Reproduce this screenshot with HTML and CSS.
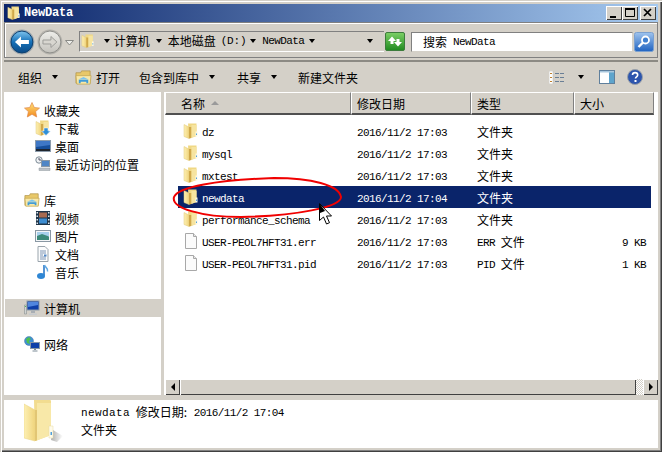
FILE: index.html
```html
<!DOCTYPE html>
<html lang="zh-CN">
<head>
    <meta charset="UTF-8">
    <title>NewData</title>
    <link rel="stylesheet" href="styles.css">
</head>
<body>
    <svg class="defs" xmlns="http://www.w3.org/2000/svg">
        <defs>
            <linearGradient id="g-back" x1="0" y1="0" x2="0" y2="1"><stop offset="0" stop-color="#7fc4ee"/><stop offset=".5" stop-color="#1570b8"/><stop offset="1" stop-color="#0b4a86"/></linearGradient>
            <linearGradient id="g-forward" x1="0" y1="0" x2="0" y2="1"><stop offset="0" stop-color="#eeeeea"/><stop offset="1" stop-color="#c4c2bc"/></linearGradient>
            <linearGradient id="g-green" x1="0" y1="0" x2="0" y2="1"><stop offset="0" stop-color="#7dd067"/><stop offset="1" stop-color="#1f8a1f"/></linearGradient>
            <linearGradient id="g-search" x1="0" y1="0" x2="0" y2="1"><stop offset="0" stop-color="#9fc4ee"/><stop offset="1" stop-color="#1f62c0"/></linearGradient>
            <linearGradient id="g-folder" x1="0" y1="0" x2="1" y2="0"><stop offset="0" stop-color="#fdf0b4"/><stop offset="1" stop-color="#f0d47c"/></linearGradient>
            <linearGradient id="g-shadow" x1="0" y1="0" x2="1" y2="0"><stop offset="0" stop-color="#b0b0ae"/><stop offset="1" stop-color="#ffffff"/></linearGradient>
            <linearGradient id="g-star" x1="0" y1="0" x2="0" y2="1"><stop offset="0" stop-color="#ffe27a"/><stop offset="1" stop-color="#f28a1e"/></linearGradient>

            <symbol id="i-folder" viewBox="0 0 16 16">
                <path d="M5 .5h8.500v12.500L6 15.500z" fill="#f0d884"/>
                <path d="M1 1.500l5 2.500v11.500l-5-2z" fill="url(#g-folder)" stroke="#e0c878" stroke-width=".5"/>
                <path d="M6 4h2.500v11L6 15.500z" fill="#d0a84a"/>
                <path d="M8.500 2h5v11l-5 2z" fill="#f6e4a0"/>
                <path d="M12.500 8.500h2v5h-2z" fill="#fdf8e4"/>
                <path d="M13 10.500h1v1.500h-1z" fill="#4f9fdc"/>
            </symbol>
            <symbol id="i-open" viewBox="0 0 18 18">
                <path d="M1 4h5l1-2h9v13H1z" fill="#e8c869" stroke="#b2964a" stroke-width=".8"/>
                <path d="M1 7h16l-1 9H2z" fill="#f8e8a8" stroke="#c4a850" stroke-width=".8"/>
                <path d="M4 15v-3.500h10V15h-2v-1.500H6V15z" fill="#3f9bd8"/>
                <path d="M3.500 11l5.500-2.500 5.500 2.500z" fill="#7cc4ee"/>
            </symbol>
            <symbol id="i-file" viewBox="0 0 16 16">
                <path d="M2.500 .5h8l3 3v12h-11z" fill="#fbfbfb" stroke="#a8a8a8"/>
                <path d="M10.500 .5v3h3" fill="#e8e8e8" stroke="#a8a8a8"/>
            </symbol>
            <symbol id="i-monitor" viewBox="0 0 16 16">
                <rect x="3" y="1" width="12" height="9" fill="#0d3fa8" stroke="#8a9aa8"/>
                <path d="M4 2h10v3L4 7z" fill="#4f86de"/>
                <path d="M7 10.500h4V13H7z" fill="#a8aeb4"/>
                <path d="M5 13.500h8v1.500H5z" fill="#c6cace"/>
            </symbol>
        </defs>
    </svg>

    <div class="window">
        <div class="titlebar">
            <svg class="title-icon"><use href="#i-folder"/></svg>
            <span class="title-text">NewData</span>
            <div class="caption-buttons">
                <span class="caption-btn"><svg width="14" height="12"><path d="M3 9h6v2H3z" fill="#000"/></svg></span>
                <span class="caption-btn"><svg width="14" height="12"><path d="M2.500 1.500h9v8h-9z" fill="none" stroke="#000"/><path d="M2 1h10v2H2z" fill="#000"/></svg></span>
                <span class="caption-btn caption-close"><svg width="14" height="12"><path d="M3 2l7 7M10 2l-7 7" stroke="#000" stroke-width="1.700"/></svg></span>
            </div>
        </div>

        <div class="navbar">
            <svg class="nav-btn" width="26" height="26" viewBox="0 0 26 26">
                <circle cx="13" cy="13" r="12.500" fill="#9ea6ac"/>
                <circle cx="13" cy="13" r="11" fill="url(#g-back)" stroke="#0c3f70"/>
                <path d="M6 13l6-5.500V11h8v4h-8v3.500z" fill="#fff"/>
            </svg>
            <svg class="nav-btn nav-forward" width="26" height="26" viewBox="0 0 26 26">
                <circle cx="13" cy="13" r="12.500" fill="#b4b2ac"/>
                <circle cx="13" cy="13" r="11" fill="url(#g-forward)" stroke="#8e8e8a"/>
                <path d="M20 13l-6-5.500V11H6v4h8v3.500z" fill="#d8d6d0" stroke="#9c9c98"/>
            </svg>
            <svg class="nav-drop" width="9" height="6"><path d="M.5.500h8L4.500 5z" fill="#eeeeea" stroke="#8a8a86"/></svg>

            <div class="address">
                <svg class="address-icon"><use href="#i-folder"/></svg>
                <span class="crumb-arrow crumb-first"></span>
                <span class="crumb">计算机</span>
                <span class="crumb-arrow"></span>
                <span class="crumb">本地磁盘<span class="mono crumb-drive">(D:)</span></span>
                <span class="crumb-arrow crumb-third"></span>
                <span class="crumb mono crumb-folder">NewData</span>
                <span class="crumb-arrow crumb-last"></span>
                <span class="crumb-arrow crumb-end"></span>
            </div>
            <svg class="refresh" width="20" height="19" viewBox="0 0 20 19">
                <rect x=".5" y=".5" width="19" height="18" rx="1.500" fill="url(#g-green)" stroke="#3c7c3c"/>
                <path d="M3 9l4-4.500 4 4.500H8.500v3h-3V9z" fill="#fff"/>
                <path d="M17 10l-4 4.500-4-4.500h2.500V7h3v3z" fill="#fff"/>
            </svg>
            <div class="search"><span>搜索</span> <span class="mono">NewData</span></div>
            <svg class="search-btn" width="20" height="20" viewBox="0 0 20 20">
                <rect x=".5" y=".5" width="19" height="19" rx="2" fill="url(#g-search)" stroke="#7aa0d0"/>
                <circle cx="11.500" cy="8" r="3.500" fill="#3f7fd0" stroke="#fff" stroke-width="1.800"/>
                <path d="M9 10.500l-4.500 4.500" stroke="#fff" stroke-width="2.400"/>
            </svg>
        </div>

        <div class="toolbar">
            <span class="tool">组织<i class="caret"></i></span>
            <span class="tool tool-open"><svg width="17" height="17"><use href="#i-open"/></svg>打开</span>
            <span class="tool tool-lib">包含到库中<i class="caret"></i></span>
            <span class="tool tool-share">共享<i class="caret"></i></span>
            <span class="tool tool-new">新建文件夹</span>
            <span class="tool-right">
                <svg width="16" height="13" viewBox="0 0 16 13">
                    <path d="M0 0h4v13H0z" fill="#fff" stroke="#b4b4b0" stroke-width=".5"/>
                    <path d="M1 2h2v1H1z M1 6h2v1H1z M1 10h2v1H1z" fill="#c0802c"/>
                    <path d="M6 2.500h9M6 6.500h9M6 10.500h9" stroke="#6a7f96" stroke-dasharray="4 1"/>
                </svg>
                <i class="caret caret-view"></i>
                <svg class="pane-icon" width="16" height="14" viewBox="0 0 16 14">
                    <rect x=".5" y=".5" width="15" height="13" fill="#fff" stroke="#5f7f9c"/>
                    <path d="M10 1h5v12h-5z" fill="#5ea4cc"/>
                    <path d="M1 1h14v1.500H1z" fill="#a9c6dc"/>
                </svg>
                <svg class="help-icon" width="16" height="16" viewBox="0 0 16 16">
                    <circle cx="8" cy="8" r="7.500" fill="#2d55ad" stroke="#9aa0a8"/>
                    <path d="M5.500 6c0-3.200 5.200-3.200 5.200 0 0 1.900-2.200 1.700-2.200 3.500" fill="none" stroke="#fff" stroke-width="1.600"/>
                    <path d="M7.500 11h2v2h-2z" fill="#fff"/>
                </svg>
            </span>
        </div>

        <div class="main">
            <nav class="sidebar">
                <div class="side-row side-head">
                    <svg width="16" height="16" viewBox="0 0 16 16"><path d="M8 .5l2.300 5 5.200.6-3.900 3.500 1.100 5.400L8 12.300 3.300 15l1.100-5.400L.5 6.100l5.200-.6z" fill="url(#g-star)" stroke="#e0884a" stroke-width=".7"/></svg>
                    <span>收藏夹</span>
                </div>
                <div class="side-row side-sub">
                    <svg width="16" height="16" viewBox="0 0 16 16"><use href="#i-folder"/><path d="M9 8h4v3h2.500L11 15.500 6.500 11H9z" fill="#2f8fd8" stroke="#fff" stroke-width=".5"/></svg>
                    <span>下载</span>
                </div>
                <div class="side-row side-sub">
                    <svg width="16" height="16" viewBox="0 0 16 16"><rect x=".5" y="2.500" width="15" height="11" fill="#17509c" stroke="#8c9cac"/><path d="M1 11h14v2H1z" fill="#20262e"/><path d="M1 3h14v4L1 9z" fill="#3f78c6"/></svg>
                    <span>桌面</span>
                </div>
                <div class="side-row side-sub">
                    <svg width="16" height="16" viewBox="0 0 16 16"><circle cx="4" cy="4" r="3.200" fill="#f0f2f4" stroke="#7c8a96"/><path d="M4 2v2h2" fill="none" stroke="#556"/><rect x="6.500" y="4.500" width="8" height="6" fill="#4f86c6" stroke="#8898a6"/><path d="M4 12h11v2.500H4z" fill="#bcc2c8" stroke="#8e969c" stroke-width=".5"/></svg>
                    <span>最近访问的位置</span>
                </div>

                <div class="side-row side-head side-group">
                    <svg width="16" height="16" viewBox="0 0 18 18"><use href="#i-open"/></svg>
                    <span>库</span>
                </div>
                <div class="side-row side-sub">
                    <svg width="16" height="16" viewBox="0 0 16 16"><rect x="1" y="1" width="14" height="14" fill="#20364a"/><path d="M4 2.500h8v5H4z" fill="#a86a50"/><path d="M4 8.500h8v5H4z" fill="#3c8cd0"/><path d="M1.500 2h1.500v1.500H1.500z M1.500 5.500h1.500V7H1.500z M1.500 9h1.500v1.500H1.500z M1.500 12.500h1.500V14H1.500z M13 2h1.500v1.500H13z M13 5.500h1.500V7H13z M13 9h1.500v1.500H13z M13 12.500h1.500V14H13z" fill="#dfe6ec"/></svg>
                    <span>视频</span>
                </div>
                <div class="side-row side-sub">
                    <svg width="16" height="16" viewBox="0 0 16 16"><rect x=".5" y="2.500" width="15" height="11" fill="#f4f6f8" stroke="#8a98a4"/><path d="M2 4h12v4H2z" fill="#a8d0ec"/><path d="M2 8l5-2 7 2.500V12H2z" fill="#3c8a7a"/></svg>
                    <span>图片</span>
                </div>
                <div class="side-row side-sub">
                    <svg width="16" height="16" viewBox="0 0 16 16"><path d="M3 .5h7l3 3v12H3z" fill="#fbfcfd" stroke="#9aa4ac"/><path d="M5 5h6M5 7h6M5 9h3M5 11h6M5 13h6" stroke="#7c94b4"/><path d="M9 8.500h2.500v2H9z" fill="#4f86c6"/></svg>
                    <span>文档</span>
                </div>
                <div class="side-row side-sub">
                    <svg width="16" height="16" viewBox="0 0 16 16"><path d="M9 1v10.500" stroke="#2a78c8" stroke-width="1.600"/><ellipse cx="6" cy="12" rx="4" ry="3" fill="#2f86d4"/><path d="M9.500 1c.5 2.500 4 3 3 6.500" fill="none" stroke="#5fa8e4" stroke-width="1.500"/></svg>
                    <span>音乐</span>
                </div>

                <div class="side-row side-head side-group side-selected">
                    <svg width="16" height="16" viewBox="0 0 16 16"><use href="#i-monitor"/><path d="M.5 5h2v9h-2z" fill="#d0d4d4" stroke="#7c8484" stroke-width=".5"/><path d="M1 6h1v1H1z" fill="#4fbf4f"/></svg>
                    <span>计算机</span>
                </div>
                <div class="side-row side-head side-group">
                    <svg width="16" height="16" viewBox="0 0 16 16"><circle cx="5" cy="5" r="4.500" fill="#3f8fd8" stroke="#4a7a9a" stroke-width=".5"/><path d="M2 3l3-2 2 2-2 2 1 3-3-1z" fill="#4fc04f"/><rect x="6.500" y="6.500" width="9" height="6" fill="#0d3fa8" stroke="#8898a6"/><path d="M10 12.500h2V14h-2zM8.500 14.500h5v1h-5z" fill="#7c8c98"/></svg>
                    <span>网络</span>
                </div>
            </nav>

            <section class="files">
                <div class="file-header">
                    <div class="col-head col-name">名称<i class="sort-arrow"></i></div>
                    <div class="col-head">修改日期</div>
                    <div class="col-head">类型</div>
                    <div class="col-head col-last">大小</div>
                </div>
                <div class="file-list">
                    <div class="file-row">
                        <span class="file-name"><svg width="16" height="16"><use href="#i-folder"/></svg><span class="mono">dz</span></span>
                        <span class="mono">2016/11/2 17:03</span><span>文件夹</span><span></span>
                    </div>
                    <div class="file-row">
                        <span class="file-name"><svg width="16" height="16"><use href="#i-folder"/></svg><span class="mono">mysql</span></span>
                        <span class="mono">2016/11/2 17:03</span><span>文件夹</span><span></span>
                    </div>
                    <div class="file-row">
                        <span class="file-name"><svg width="16" height="16"><use href="#i-folder"/></svg><span class="mono">mxtest</span></span>
                        <span class="mono">2016/11/2 17:03</span><span>文件夹</span><span></span>
                    </div>
                    <div class="file-row file-selected">
                        <span class="file-name"><svg width="16" height="16"><use href="#i-folder"/></svg><span class="mono">newdata</span></span>
                        <span class="mono">2016/11/2 17:04</span><span>文件夹</span><span></span>
                    </div>
                    <div class="file-row">
                        <span class="file-name"><svg width="16" height="16"><use href="#i-folder"/></svg><span class="mono">performance_schema</span></span>
                        <span class="mono">2016/11/2 17:03</span><span>文件夹</span><span></span>
                    </div>
                    <div class="file-row">
                        <span class="file-name"><svg width="16" height="16"><use href="#i-file"/></svg><span class="mono">USER-PEOL7HFT31.err</span></span>
                        <span class="mono">2016/11/2 17:03</span><span><span class="mono file-ext">ERR</span> 文件</span><span class="mono file-size">9 KB</span>
                    </div>
                    <div class="file-row">
                        <span class="file-name"><svg width="16" height="16"><use href="#i-file"/></svg><span class="mono">USER-PEOL7HFT31.pid</span></span>
                        <span class="mono">2016/11/2 17:03</span><span><span class="mono file-ext">PID</span> 文件</span><span class="mono file-size">1 KB</span>
                    </div>
                </div>
                <div class="scrollbar">
                    <span class="scroll-btn"><i class="arrow-left"></i></span>
                    <span class="scroll-thumb"></span>
                    <span class="scroll-track"></span>
                    <span class="scroll-btn"><i class="arrow-right"></i></span>
                </div>
            </section>
        </div>

        <div class="details">
            <svg class="details-icon" width="48" height="48" viewBox="0 0 48 48">
                <path d="M27 40L29 30 39 36 33 42z" fill="url(#g-shadow)"/>
                <path d="M10 0h16q1 0 1 1V35L11 41z" fill="#f2dc90"/>
                <path d="M0 4L11 10V41L0 38z" fill="url(#g-folder)" stroke="#ecd68c" stroke-width=".6"/>
                <path d="M11 10h2V40.500L11 41z" fill="#e2c674"/>
                <path d="M13 3h14V35L13 40.500z" fill="#f8e8a8"/>
                <path d="M25 26h4v12h-4z" fill="#fffbea" stroke="#e6d8a4" stroke-width=".5"/>
                <path d="M26.500 32h1.500v3h-1.500z" fill="#4f9fdc"/>
            </svg>
            <div class="details-text">
                <div><span class="mono details-name">newdata</span> 修改日期: <span class="mono details-date">2016/11/2 17:04</span></div>
                <div>文件夹</div>
            </div>
        </div>

        <svg class="annotation" width="180" height="50" viewBox="0 0 180 50">
            <path d="M8 25C12 15 50 8 108 6c37 0 65 7 67 19 0 10-45 19-100 20C35 45 5 36 8 25z" fill="none" stroke="#f00000" stroke-width="2"/>
        </svg>
        <svg class="cursor" width="13" height="23" viewBox="0 0 13 23">
            <path d="M.5.500v17l4-3.500 3 7 3-1.300-3-6.700h5z" fill="#fff" stroke="#000"/>
            <path d="M1 1v9l5-2z" fill="#000"/>
        </svg>
    </div>
</body>
</html>
```

FILE: styles.css
```css
* {
    margin: 0;
    padding: 0;
    box-sizing: border-box;
}

body {
    font-family: "Noto Sans CJK SC", sans-serif;
    font-size: 12px;
    color: #000;
    background: #d4d0c8;
}

.defs {
    display: block;
    width: 0;
    height: 0;
}

i {
    display: block;
}

/* SimSun-like latin: 6px per character */
.mono {
    font-family: "Liberation Mono", monospace;
    font-size: 11px;
    letter-spacing: -0.6px;
}

.window {
    position: relative;
    width: 662px;
    height: 452px;
    display: flex;
    flex-direction: column;
    padding: 4px;
    background: #d4d0c8;
    box-shadow: inset 1px 1px 0 #d4d0c8, inset 2px 2px 0 #fff, inset -1px -1px 0 #404040, inset -2px -2px 0 #808080;
}

/* title bar */
.titlebar {
    height: 18px;
    display: flex;
    align-items: center;
    padding: 0 2px 0 3px;
    background: linear-gradient(to right, #0a246a, #a6caf0);
    color: #fff;
}

.title-icon {
    width: 14px;
    height: 16px;
}

.title-text {
    margin-left: 3px;
    font-family: "Liberation Mono", monospace;
    font-size: 12px;
    font-weight: bold;
    letter-spacing: -0.2px;
}

.caption-buttons {
    margin-left: auto;
    display: flex;
}

.caption-btn {
    width: 16px;
    height: 14px;
    display: flex;
    align-items: center;
    justify-content: center;
    background: #d4d0c8;
    box-shadow: inset 1px 1px 0 #fff, inset -1px -1px 0 #404040;
}

.caption-close {
    margin-left: 2px;
}

/* back / forward, address, search */
.navbar {
    height: 36px;
    display: flex;
    align-items: center;
    padding: 3px 3px 0 4px;
    border: 1px solid #808080;
    box-shadow: inset 1px 1px 0 #fff;
}

.nav-forward {
    margin-left: 2px;
}

.nav-drop {
    margin: 3px 0 0 2px;
}

.address {
    width: 307px;
    height: 21px;
    margin-left: 5px;
    display: flex;
    align-items: center;
    padding: 0 0 2px 1px;
    background: #d4d0c8;
    border-left: 1px solid #808080;
    border-top: 1px solid #808080;
    border-bottom: 1px solid #fff;
}

.address-icon {
    width: 14px;
    height: 16px;
    flex: none;
}

.crumb {
    white-space: nowrap;
}

.crumb-drive {
    margin-left: 5px;
    vertical-align: 2px;
    letter-spacing: -0.2px;
}

.crumb-folder {
    padding-top: 1px;
}

.crumb-arrow {
    width: 0;
    height: 0;
    margin: 0 6px;
    flex: none;
    border: 3.500px solid transparent;
    border-top: 4px solid #000;
    border-bottom: 0;
}

.crumb-first {
    margin: 0 4px 0 9px;
}

.crumb-third {
    margin: 0 6px 0 4px;
}

.crumb-last {
    margin: 0 5px;
}

.crumb-end {
    margin-left: 47px;
}

.refresh {
    margin-left: 1px;
    flex: none;
}

.search {
    width: 222px;
    height: 20px;
    margin-left: 6px;
    display: flex;
    align-items: center;
    gap: 6px;
    padding: 0 0 1px 11px;
    background: #fff;
    border: 1px solid #d4d0c8;
    border-top-color: #808080;
    border-left-color: #808080;
    flex: none;
}

.search .mono {
    padding-top: 2px;
}

.search-btn {
    margin-left: 1px;
    flex: none;
}

/* command bar */
.toolbar {
    height: 32px;
    margin-top: 2px;
    display: flex;
    align-items: center;
    padding-left: 14px;
    border-top: 2px solid #8c8a84;
}

.tool {
    display: flex;
    align-items: center;
    white-space: nowrap;
}

.caret {
    width: 0;
    height: 0;
    margin-left: 10px;
    border: 3.500px solid transparent;
    border-top: 4px solid #000;
    border-bottom: 0;
}

.tool-open {
    margin-left: 17px;
    gap: 4px;
}

.tool-lib {
    margin-left: 19px;
}

.tool-share {
    margin-left: 22px;
}

.tool-new {
    margin-left: 21px;
}

.tool-right {
    margin-left: auto;
    margin-right: 15px;
    display: flex;
    align-items: center;
}

.caret-view {
    margin-left: 13px;
}

.pane-icon {
    margin-left: 15px;
}

.help-icon {
    margin-left: 12px;
}

/* navigation + file list */
.main {
    flex: 1;
    min-height: 0;
    display: flex;
}

.sidebar {
    width: 157px;
    padding-top: 9px;
    background: #fff;
    flex: none;
}

.side-row {
    height: 18px;
    display: flex;
    align-items: center;
    gap: 4px;
    white-space: nowrap;
}

.side-head {
    padding-left: 20px;
}

.side-sub {
    padding-left: 31px;
}

.side-group {
    margin-top: 18px;
}

.side-selected {
    margin-left: 1px;
    padding-left: 19px;
    background: #d4d0c8;
}

.files {
    flex: 1;
    margin-left: 3px;
    display: flex;
    flex-direction: column;
    background: #fff;
    min-width: 0;
}

.file-header {
    height: 23px;
    margin-left: 1px;
    display: grid;
    grid-template-columns: 186px 120px 103px 80px;
    flex: none;
}

.col-head {
    display: flex;
    align-items: center;
    padding-left: 5px;
    background: #d4d0c8;
    border-top: 1px solid #fff;
    border-left: 1px solid #fff;
    border-right: 1px solid #808080;
    border-bottom: 2px solid #505050;
}

.col-name {
    padding-left: 15px;
}

.sort-arrow {
    width: 0;
    height: 0;
    margin-left: 6px;
    border: 4px solid transparent;
    border-bottom: 4px solid #9a9a9a;
    border-top: 0;
}

.file-list {
    flex: 1;
    min-height: 0;
    padding: 5px 0 0 14px;
}

.file-row {
    height: 22px;
    width: 473px;
    display: grid;
    grid-template-columns: 173px 120px 104px 76px;
    align-items: center;
}

.file-row > span {
    padding-left: 6px;
    white-space: nowrap;
}

.file-row > .mono,
.file-name .mono {
    padding-top: 4px;
}

.file-row > .file-name {
    display: flex;
    align-items: center;
    gap: 3px;
    padding-left: 5px;
}

.file-row > .file-size {
    padding: 4px 5px 0 0;
    text-align: right;
}

.file-ext {
    margin-right: 3px;
    vertical-align: 1px;
}

.file-selected {
    background: #0a246a;
    color: #fff;
}

.scrollbar {
    height: 16px;
    display: flex;
    flex: none;
    margin-left: 1px;
}

.scroll-btn {
    width: 15px;
    display: flex;
    align-items: center;
    justify-content: center;
    background: #d4d0c8;
    box-shadow: inset 1px 1px 0 #fff, inset -1px -1px 0 #404040;
}

.arrow-left {
    border: 4px solid transparent;
    border-right: 4px solid #000;
    border-left: 0;
}

.arrow-right {
    border: 4px solid transparent;
    border-left: 4px solid #000;
    border-right: 0;
}

.scroll-thumb {
    width: 456px;
    background: #d4d0c8;
    box-shadow: inset 1px 1px 0 #fff, inset -1px -1px 0 #404040;
}

.scroll-track {
    flex: 1;
    background: repeating-conic-gradient(#d4d0c8 0 25%, #fff 0 50%) 0 0 / 2px 2px;
}

/* details pane */
.details {
    height: 48px;
    margin-top: 5px;
    display: flex;
    flex: none;
    background: #fff;
}

.details-icon {
    margin-left: 20px;
    flex: none;
}

.details-text {
    margin: 3px 0 0 9px;
}

.details-text > div {
    height: 18px;
    line-height: 18px;
    white-space: nowrap;
}

.details-text .mono {
    vertical-align: 1px;
}

.details-name {
    margin-right: 3px;
    letter-spacing: 0.400px;
}

.details-date {
    margin-left: 4px;
}

/* hand-drawn marks on top of the window */
.annotation {
    position: absolute;
    left: 166px;
    top: 172px;
}

.cursor {
    position: absolute;
    left: 319px;
    top: 203px;
}
```
